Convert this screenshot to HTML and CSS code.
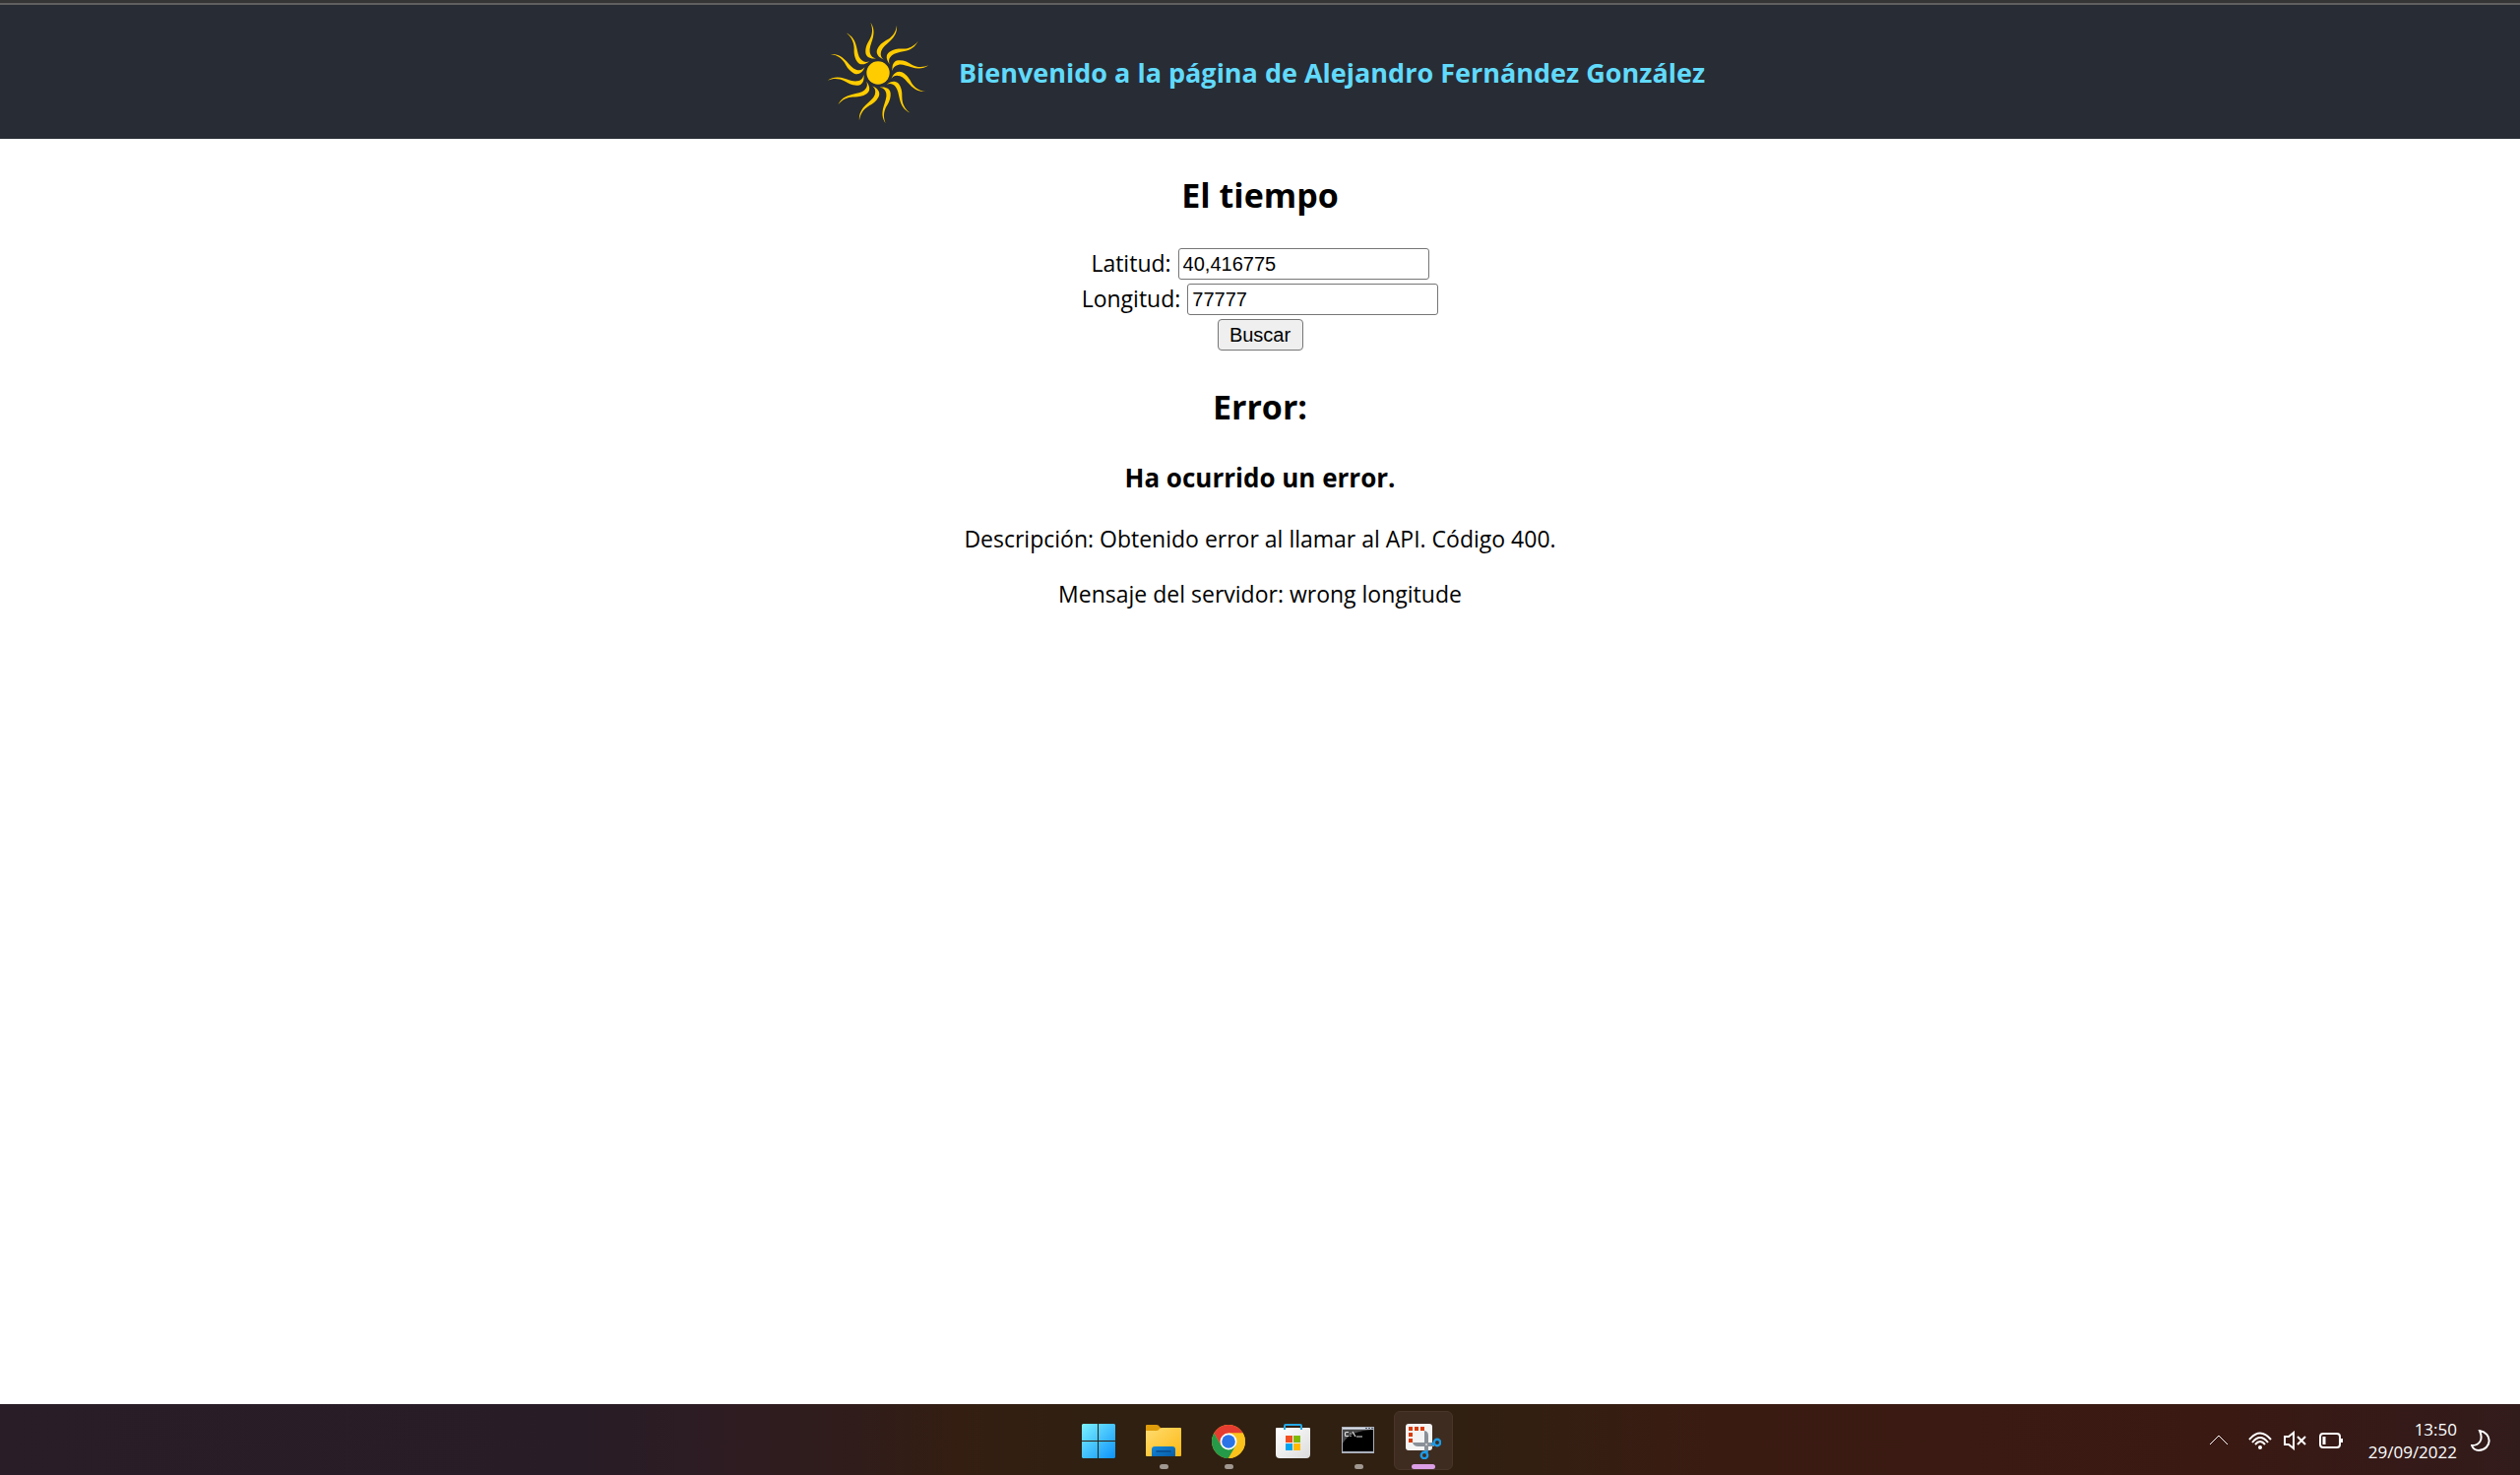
FILE: index.html
```html
<!DOCTYPE html>
<html lang="es">
<head>
<meta charset="utf-8">
<title>El tiempo</title>
<link rel="stylesheet" href="styles.css">
</head>
<body>
<header class="banner">
  <svg class="sun" viewBox="-156 -156 312 312" aria-hidden="true">
    <defs>
      <path id="ray" d="M-23-154C-12-138-11-122-17-102C-22-86-27-74-25-63C-22-50-15-45-5-44C-22-41-37-47-38-62C-39-80-32-91-25-103C-17-118-15-135-23-154Z"/>
    </defs>
    <circle r="35"/>
    <use href="#ray"/>
    <use href="#ray" transform="rotate(30)"/>
    <use href="#ray" transform="rotate(60)"/>
    <use href="#ray" transform="rotate(90)"/>
    <use href="#ray" transform="rotate(120)"/>
    <use href="#ray" transform="rotate(150)"/>
    <use href="#ray" transform="rotate(180)"/>
    <use href="#ray" transform="rotate(210)"/>
    <use href="#ray" transform="rotate(240)"/>
    <use href="#ray" transform="rotate(270)"/>
    <use href="#ray" transform="rotate(300)"/>
    <use href="#ray" transform="rotate(330)"/>
  </svg>
  <h1 class="banner-title">Bienvenido a la página de Alejandro Fernández González</h1>
</header>

<main class="content">
  <h2 class="heading">El tiempo</h2>
  <form class="search">
    <div class="field"><label for="lat">Latitud:</label><input class="text-box" id="lat" type="text" value="40,416775"></div>
    <div class="field"><label for="lon">Longitud:</label><input class="text-box" id="lon" type="text" value="77777"></div>
    <button class="submit" type="button">Buscar</button>
  </form>
  <h2 class="heading">Error:</h2>
  <h3 class="subheading">Ha ocurrido un error.</h3>
  <p class="message">Descripción: Obtenido error al llamar al API. Código 400.</p>
  <p class="message">Mensaje del servidor: wrong longitude</p>
</main>

<footer class="taskbar">
  <nav class="apps" aria-label="Aplicaciones">
    <button class="app" type="button" aria-label="Inicio">
      <svg viewBox="0 0 36 36">
        <defs><linearGradient id="win" gradientUnits="userSpaceOnUse" x1="0" y1="0" x2="36" y2="36"><stop offset="0" stop-color="#7df3ff"/><stop offset="1" stop-color="#0a90fb"/></linearGradient></defs>
        <path fill="url(#win)" d="M2 0H17V17H1V1ZM18 0H34L35 1V17H18ZM1 18H17V35H2L1 34ZM18 18H35V34L34 35H18Z"/>
      </svg>
    </button>
    <button class="app running" type="button" aria-label="Explorador de archivos">
      <svg viewBox="0 0 36 36">
        <defs><linearGradient id="folder" x1="0" y1="0" x2="1" y2="1"><stop offset="0" stop-color="#ffdc70"/><stop offset="1" stop-color="#fdb914"/></linearGradient>
        <linearGradient id="tray" x1="0" y1="0" x2="1" y2="1"><stop offset="0" stop-color="#1588d8"/><stop offset="1" stop-color="#075ca8"/></linearGradient></defs>
        <path fill="#de9c0b" d="M0 2Q0 1 1 1H11Q13 1 14 3L16 5V12H0Z"/>
        <path fill="url(#folder)" d="M0 7H11Q13 7 14 5Q15 4 17 4H35Q36 4 36 5V32Q36 33 35 33H1Q0 33 0 32Z"/>
        <path fill="url(#tray)" d="M6 33V26Q6 23 9 23H27Q30 23 30 26V33Z"/>
        <path stroke="#084a8a" stroke-width="1.6" stroke-linecap="round" d="M11 28H25"/>
      </svg>
    </button>
    <button class="app running" type="button" aria-label="Chrome">
      <svg viewBox="-18 -18 36 36">
        <circle r="17" fill="#f9bf20"/>
        <path fill="#e53c30" d="M0 0V-8.5H14.7A17 17 0 0 0-14.7-8.5L-7.4 4.2Z"/>
        <path fill="#259a48" d="M-14.7-8.5A17 17 0 0 0 0 17L7.4 4.2L0 0L-7.4 4.2Z"/>
        <path fill="#fbc21b" d="M0-8.5H14.7A17 17 0 0 1 0 17L7.4 4.2Z"/>
        <circle r="8.5" fill="#fff"/><circle r="6.8" fill="#2b74e8"/>
      </svg>
    </button>
    <button class="app" type="button" aria-label="Microsoft Store">
      <svg viewBox="0 0 36 36">
        <defs><linearGradient id="bag" x1="0" y1="0" x2="1" y2="1"><stop offset="0" stop-color="#fff"/><stop offset="1" stop-color="#dcdcdc"/></linearGradient></defs>
        <path fill="url(#bag)" d="M0 5Q0 4 1 4H34Q35 4 35 5V31Q35 35 31 35H4Q0 35 0 31Z"/>
        <path fill="none" stroke="#24a8e4" stroke-width="2" d="M9 6V2Q9 1 10 1H25Q26 1 26 2V6"/>
        <path fill="#f25022" d="M10 12h7v7h-7z"/><path fill="#7fba00" d="M18 12h7v7h-7z"/>
        <path fill="#00a4ef" d="M10 20h7v7h-7z"/><path fill="#ffb900" d="M18 20h7v7h-7z"/>
      </svg>
    </button>
    <button class="app running" type="button" aria-label="Símbolo del sistema">
      <svg viewBox="0 0 36 36">
        <path fill="#aab0bb" d="M1 3H34V30H1Z"/><path fill="#dde1e8" d="M2 4H33V5H2Z"/>
        <path fill="#000" d="M2 6H33V28H2Z"/><path fill="#484848" d="M2 6H33Q9 7 2 20Z"/>
        <path fill="none" stroke="#ddd" stroke-width="1.2" d="M8 8.5H5.500Q4.500 8.500 4.500 9.500V11.500Q4.500 12.500 5.500 12.500H8M10 9.500V10.500M10 12V13M12 8L15 13M16 13H22"/>
        <path stroke="#555d70" stroke-width="1" d="M25 4.500H27M28 4.500H30M31 4.500H33"/>
      </svg>
    </button>
    <button class="app running active" type="button" aria-label="Recortes">
      <svg viewBox="0 0 36 36">
        <rect width="27" height="27" rx="3" fill="#f4f4f4"/>
        <path fill="#d83b01" d="M3 3h4v4H3zM9 3h4v4H9zM15 3h4v4h-4zM3 9h4v4H3zM3 15h4v4H3z"/>
        <path fill="#8a9097" d="M18 7Q23 7 23 12V27L19 30V7ZM7 19H29V23H13Q8 23 7 19Z"/>
        <circle cx="21" cy="21" r="1" fill="#ddd"/>
        <circle cx="32" cy="19" r="3.200" fill="none" stroke="#1c9be6" stroke-width="2.400"/>
        <circle cx="19" cy="32" r="3.200" fill="none" stroke="#1c9be6" stroke-width="2.400"/>
        <path stroke="#1c9be6" stroke-width="2.400" d="M22 27L21 30M26 21L29 20"/>
      </svg>
    </button>
  </nav>
  <div class="status">
    <svg class="chevron" viewBox="0 0 20 20"><path d="M1 14L10 5L19 14"/></svg>
    <svg class="wifi" viewBox="0 0 24 20"><path d="M1 9Q12-4 23 9M4 12Q12 2 20 12M7 14Q12 8 17 14"/><circle cx="12" cy="17" r="2"/></svg>
    <svg class="volume" viewBox="0 0 24 20"><path d="M1 6V14H5L10 18V2L5 6ZM14 6L22 14M22 6L14 14"/></svg>
    <svg class="battery" viewBox="0 0 24 20"><rect x="1" y="3" width="20" height="14" rx="3"/><path d="M23 8V12M5 6V14" stroke-width="3"/></svg>
    <div class="clock"><time>13:50</time><time>29/09/2022</time></div>
    <svg class="moon" viewBox="0 0 20 22"><path d="M9 1C22 3 22 20 8 21Q3 21 1 16C9 16 13 10 9 1Z"/></svg>
  </div>
</footer>
</body>
</html>
```
FILE: styles.css
```css
* {
  box-sizing: border-box;
}

body {
  display: flex;
  flex-direction: column;
  min-height: 100vh;
  margin: 0;
  background: #fff;
  color: #000;
  font-family: "Open Sans", "Noto Sans", sans-serif;
  font-size: 23px;
  line-height: 32px;
}

.banner {
  display: flex;
  align-items: center;
  justify-content: center;
  gap: 30px;
  height: 141px;
  padding: 4px 0 0 12px;
  border-top: 3px solid #353535;
  background: linear-gradient(#606060 2px, #282c34 2px);
  color: #61dafb;
}

.sun {
  width: 104px;
  height: 104px;
  fill: #ffcc00;
}

.banner-title {
  margin: 0;
  font-size: 27px;
  line-height: 36px;
}

.content {
  flex: 1;
  text-align: center;
}

.heading {
  margin: 33px 0 30px;
  font-size: 34px;
  line-height: 48px;
}

.search {
  display: flex;
  flex-direction: column;
  align-items: center;
  gap: 4px;
}

.field {
  display: flex;
  align-items: center;
  gap: 7px;
  height: 32px;
}

.field label {
  line-height: 30px;
  padding-bottom: 2px;
}

.text-box {
  width: 255px;
  height: 32px;
  padding: 0 4px;
  border: 1px solid #767676;
  border-radius: 3px;
  font: 20px "Liberation Sans", Arial, sans-serif;
}

.submit {
  width: 87px;
  height: 32px;
  padding: 0;
  border: 1px solid #767676;
  border-radius: 4px;
  background: #efefef;
  font: 20px "Liberation Sans", Arial, sans-serif;
}

.subheading {
  margin: 0 0 28px;
  font-size: 26px;
  line-height: 36px;
}

.message {
  margin: 0 0 24px;
}

.taskbar {
  display: grid;
  grid-template-columns: 1fr auto 1fr;
  align-items: center;
  height: 72px;
  padding: 2px 0 0 2px;
  background: linear-gradient(90deg, #291e27 0%, #281c26 23%, #2e1c22 29%, #301c1a 34%, #341e12 38%, #302012 43%, #302012 58%, #3a1b12 68%, #3a1912 88%, #341a19 96%, #321c1b 100%);
  color: #fff;
}

.apps {
  display: flex;
  grid-column: 2;
  gap: 6px;
}

.app {
  position: relative;
  display: grid;
  place-items: center;
  width: 60px;
  height: 60px;
  padding: 2px 0 0;
  border: 1px solid transparent;
  border-radius: 6px;
  background: none;
}

.app svg {
  width: 36px;
  height: 36px;
}

.running::after {
  content: "";
  position: absolute;
  bottom: 0;
  width: 9px;
  height: 5px;
  border-radius: 3px;
  background: #a09890;
}

.active {
  border-color: #49352a;
  background: #3f2c21;
}

.active::after {
  width: 24px;
  background: #dc9ee6;
}

.status {
  display: flex;
  align-items: center;
  justify-content: flex-end;
  gap: 12px;
  padding-right: 30px;
}

.status svg {
  width: 24px;
  height: 20px;
  fill: none;
  stroke: #fff;
  stroke-width: 2;
}

.status .chevron {
  width: 20px;
  margin-right: 8px;
  stroke-width: 1;
}

.status .wifi circle {
  fill: #fff;
  stroke: none;
}

.clock {
  display: grid;
  margin: 0 2px 0 14px;
  font-size: 17px;
  line-height: 23px;
  text-align: right;
}

.status .moon {
  width: 20px;
  height: 22px;
}
```
